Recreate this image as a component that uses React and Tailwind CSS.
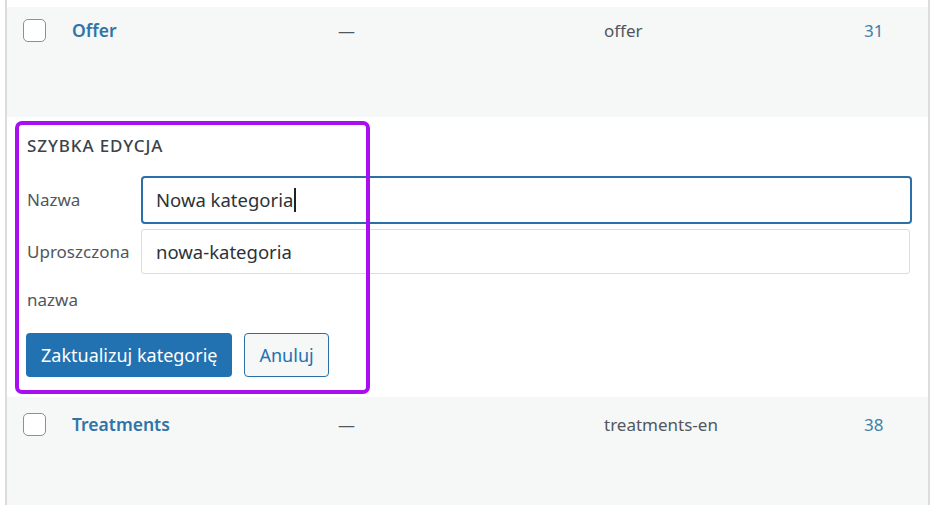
const font = { fontFamily: '"Noto Sans", "Open Sans", sans-serif' };

function Checkbox() {
  return <span className="block w-[23px] h-[23px] rounded-[5px] border-[1.5px] border-[#8c8f94] bg-white" />;
}

function Row({ name, slug, count, top }) {
  return (
    <div className={`flex items-center bg-[#f6f7f7] h-[110px] ${top ? "pb-[64px]" : "pb-[56px]"}`}>
      <div className="w-[65px] pl-[16px]">
        <Checkbox />
      </div>
      <div className="w-[266px] text-[17.5px] font-semibold text-[#2f74a8] leading-[23px]">{name}</div>
      <div className="w-[266px] text-[17px] text-[#50575e] leading-[23px]">—</div>
      <div className="w-[260px] text-[17px] text-[#50575e] leading-[23px]">{slug}</div>
      <div className="text-[17px] text-[#3f7fa8] leading-[23px]">{count}</div>
    </div>
  );
}

export default function App() {
  return (
    <div className="w-[938px] h-[505px] bg-white overflow-hidden" style={font}>
      <div className="ml-[5px] w-[925px] h-full border-l-2 border-r-2 border-[#dcdcde]">
        <div className="h-[7px] bg-white" />
        <Row name="Offer" slug="offer" count="31" top />
        <div className="h-[280px] bg-white pt-[4px] pl-[8px]">
          <div className="relative h-[273px]">
            <div className="absolute left-0 top-0 w-[355px] h-[273px] rounded-[7px] border-[4px] border-[#a80ef0] pointer-events-none" />
            <div className="pt-[14px] pl-[12px]">
              <div className="text-[17px] font-medium text-[#3c434a] leading-[22px] tracking-[0.9px]">SZYBKA EDYCJA</div>
              <div className="flex items-center mt-[19px]">
                <div className="w-[114px] text-[17px] text-[#50575e]">Nazwa</div>
                <div className="w-[771px] h-[48px] rounded-[4px] border-2 border-[#2c6fa6] flex items-center pl-[13px] text-[18.5px] text-[#2c3338]">
                  Nowa kategoria<span className="inline-block w-[1.5px] h-[24px] bg-[#1d2327] ml-[1px]" />
                </div>
              </div>
              <div className="flex items-start mt-[5px]">
                <div className="w-[114px] text-[17px] text-[#50575e] leading-[48px] -mt-[1px]">
                  <div>Uproszczona</div>
                  <div>nazwa</div>
                </div>
                <div className="w-[769px] h-[45px] rounded-[3px] border border-[#dcdcde] flex items-center pl-[14px] text-[18.5px] text-[#2c3338]">
                  nowa-kategoria
                </div>
              </div>
              <div className="flex gap-[12px] mt-[9px] -ml-[1px]">
                <button className="h-[44px] px-[15px] rounded-[4px] bg-[#2271b1] text-white text-[18px] leading-none">Zaktualizuj kategorię</button>
                <button className="h-[44px] px-[14px] rounded-[4px] border-[1.5px] border-[#2c6fa6] bg-[#f6f7f7] text-[#2271b1] text-[18px] leading-none">Anuluj</button>
              </div>
            </div>
          </div>
        </div>
        <Row name="Treatments" slug="treatments-en" count="38" />
      </div>
    </div>
  );
}
